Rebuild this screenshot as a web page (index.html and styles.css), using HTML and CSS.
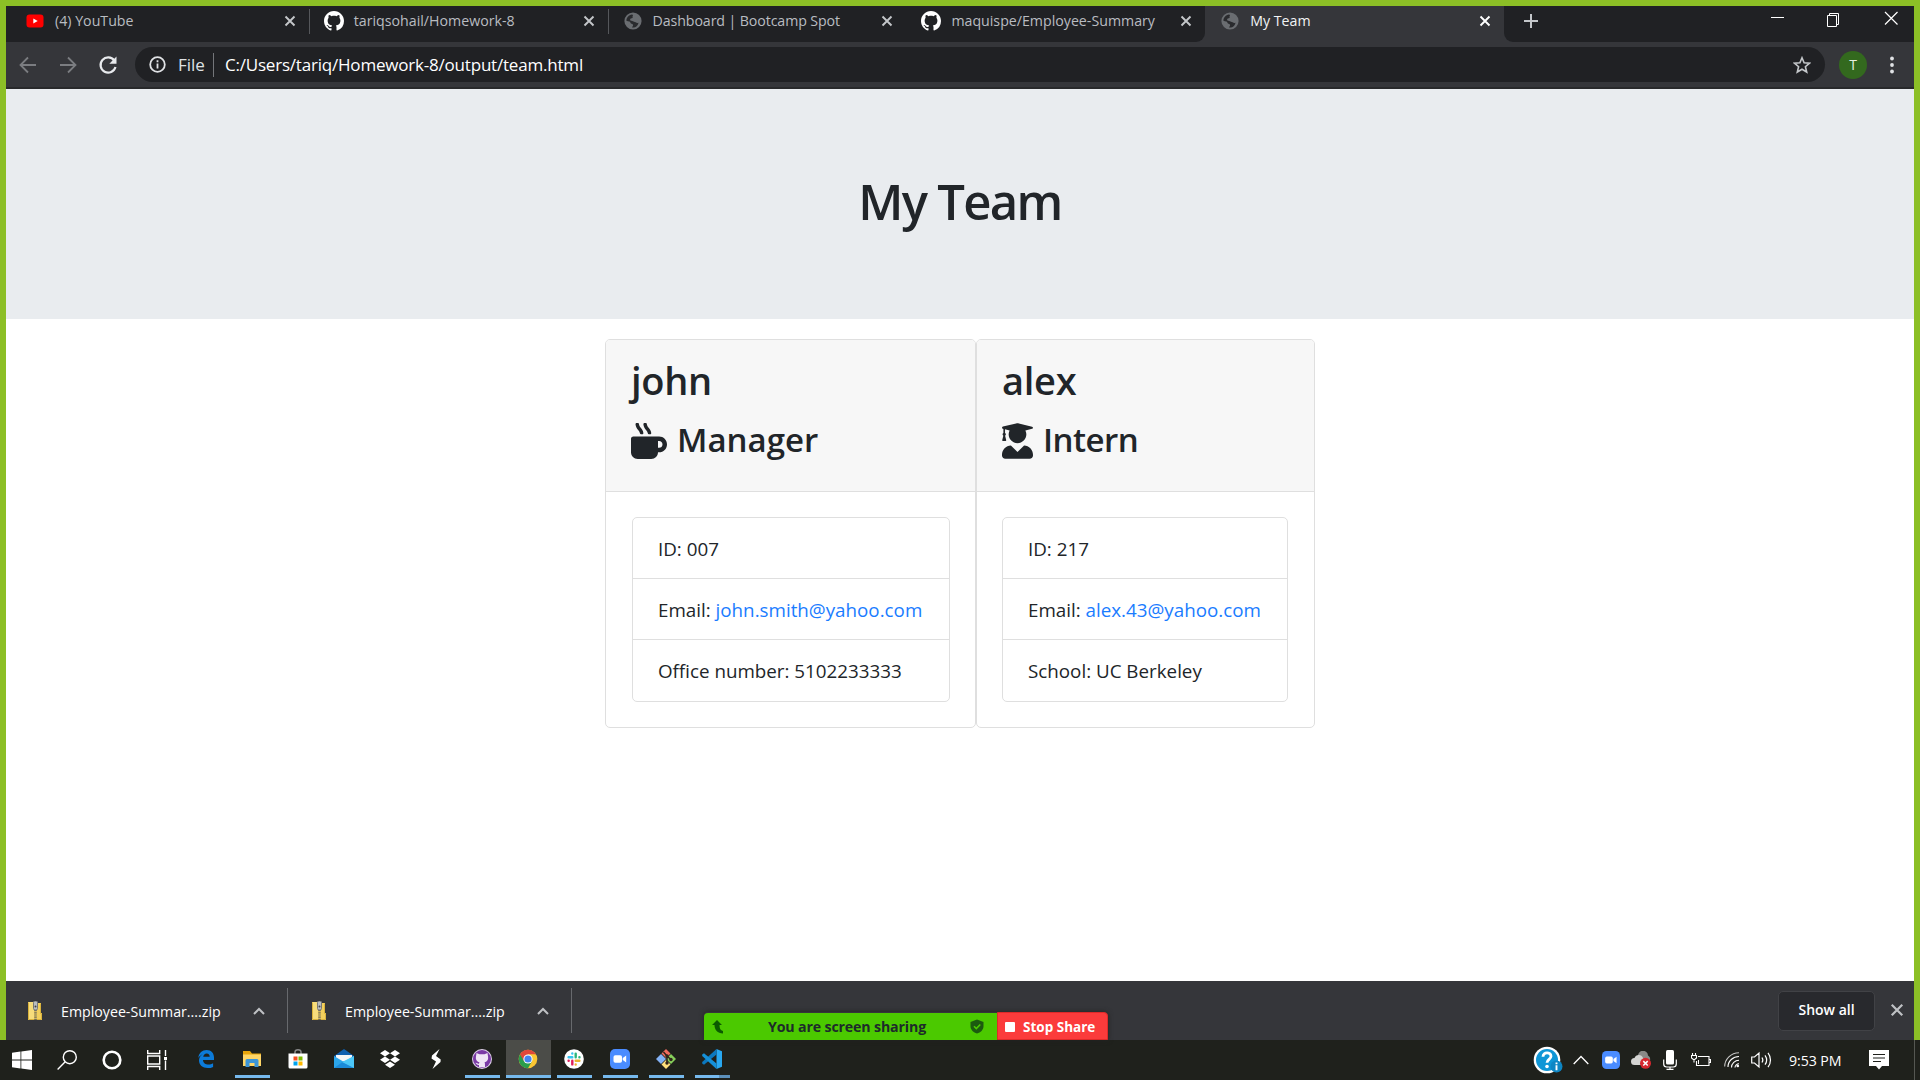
FILE: index.html
```html
<!DOCTYPE html>
<html lang="en">
<head>
<meta charset="utf-8">
<title>My Team</title>
<link rel="stylesheet" href="styles.css">
</head>
<body>
<svg class="defs" width="0" height="0" aria-hidden="true">
  <symbol id="github" viewBox="0 0 16 16"><path d="M8 0C3.58 0 0 3.58 0 8c0 3.54 2.29 6.53 5.47 7.59.4.07.55-.17.55-.38 0-.19-.01-.82-.01-1.49-2.01.37-2.53-.49-2.69-.94-.09-.23-.48-.94-.82-1.13-.28-.15-.68-.52-.01-.53.63-.01 1.08.58 1.23.82.72 1.21 1.87.87 2.33.66.07-.52.28-.87.51-1.07-1.78-.2-3.64-.89-3.64-3.95 0-.87.31-1.59.82-2.15-.08-.2-.36-1.02.08-2.12 0 0 .67-.21 2.2.82.64-.18 1.32-.27 2-.27s1.36.09 2 .27c1.53-1.04 2.2-.82 2.2-.82.44 1.1.16 1.92.08 2.12.51.56.82 1.27.82 2.15 0 3.07-1.87 3.75-3.65 3.95.29.25.54.73.54 1.48 0 1.07-.01 1.93-.01 2.2 0 .21.15.46.55.38A8.01 8.01 0 0 0 16 8c0-4.42-3.58-8-8-8z"/></symbol>
  <symbol id="globe" viewBox="0 0 18 18"><circle cx="9" cy="9" r="8.6" fill="#6a6d71"/><path d="M8 2.400c-3.200.4-5.600 3.200-5.600 6.400 1 .5 2 .3 3 .8 1.500.7.600 1.800 2 2.200 1.300.5 2 .6 1.600 1.900-.3.800-1 1.200-1 1.900 4.200.3 6.200-2.200 6.400-4.800-1.600.6-2.200-.9-3.600-.9-1.200 0-1.400-.8-2.600-1-1.300-.2-2.200-.4-2.100-1.500.1-1 1.500-.8 2.300-1.300.900-.6-.4-1.600.4-2.300.400-.4.300-1-.8-1.400z" fill="#2a2b2e"/></symbol>
  <symbol id="close" viewBox="0 0 12 12"><path d="M1.500 1.500l9 9M10.500 1.500l-9 9" fill="none" stroke="currentColor" stroke-width="1.900"/></symbol>
  <symbol id="zip" viewBox="0 0 14 20"><path d="M0 1h6v18H0z" fill="#f7dc7b"/><path d="M6 2h7v10h1v7H6z" fill="#f2cf5c"/><path d="M.5 1.500v17h13v-6h-1v-10" fill="none" stroke="#d9b23c"/><path d="M7.500 9v10" stroke="#6d6a5c" stroke-width="2.600" stroke-dasharray="1.200 1"/><rect x="5.500" y="0" width="4" height="9" rx="1.500" fill="#b9bcc0" stroke="#777"/><circle cx="7.500" cy="5.500" r="1" fill="#444"/></symbol>
  <symbol id="zoomapp" viewBox="0 0 20 20"><rect width="20" height="20" rx="5" fill="#4a8cff"/><rect x="3.500" y="6.200" width="8.500" height="7.600" rx="1.800" fill="#fff"/><path d="M12.700 9l3.500-2.500v7L12.700 11z" fill="#fff"/></symbol>
</svg>

<div class="screen">
<main class="window">
  <header class="tabs">
    <div class="tab"><svg class="fav" viewBox="0 0 20 20"><rect x="1.500" y="3.500" width="17" height="13" rx="3" fill="#f00"/><path d="M8.300 7.500l4.400 2.500-4.400 2.500z" fill="#fff"/></svg><span class="title">(4) YouTube</span><svg class="x"><use href="#close"/></svg></div>
    <div class="tab"><svg class="fav white"><use href="#github"/></svg><span class="title">tariqsohail/Homework-8</span><svg class="x"><use href="#close"/></svg></div>
    <div class="tab"><svg class="fav globe"><use href="#globe"/></svg><span class="title long">Dashboard | Bootcamp Spot</span><svg class="x"><use href="#close"/></svg></div>
    <div class="tab last"><svg class="fav white"><use href="#github"/></svg><span class="title">maquispe/Employee-Summary</span><svg class="x"><use href="#close"/></svg></div>
    <div class="tab active"><svg class="fav globe"><use href="#globe"/></svg><span class="title">My Team</span><svg class="x"><use href="#close"/></svg></div>
    <div class="strip-end">
      <svg class="plus" width="16" height="16" viewBox="0 0 16 16"><path d="M8 1v14M1 8h14" stroke="#c4c7ca" stroke-width="2"/></svg>
      <svg class="controls" width="130" height="20" viewBox="0 0 130 20"><path d="M1 8.500h13" stroke="#fff"/><path d="M57.500 6.500h9v11h-9zM59.500 6.500v-2h9v11h-2" fill="none" stroke="#fff"/><path d="M115 3l12.500 12.500M127.500 3L115 15.500" stroke="#fff" stroke-width="1.200"/></svg>
    </div>
  </header>

  <nav class="toolbar">
    <svg class="nav-btn dim" viewBox="0 0 20 20"><path d="M18 10H3M10 2.500L2.500 10l7.500 7.500"/></svg>
    <svg class="nav-btn dim" viewBox="0 0 20 20"><path d="M2 10h15M10 2.500l7.500 7.500-7.500 7.500"/></svg>
    <svg class="nav-btn" viewBox="0 0 20 20"><path d="M16.300 5.500A7.600 7.600 0 1 0 17.500 12" stroke-width="2.200"/><path d="M18.500 1.500v7.200h-7.200z" fill="#e8eaed" stroke="none"/></svg>
    <div class="omnibox">
      <svg width="17" height="17" viewBox="0 0 17 17" fill="none" stroke="#e0e2e5" stroke-width="1.800"><circle cx="8.500" cy="8.500" r="7.300"/><path d="M8.500 7.500v5M8.500 4.300v1.900"/></svg>
      <span class="scheme">File</span><span class="url">C:/Users/tariq/Homework-8/output/team.html</span>
      <svg class="star" width="18" height="18" viewBox="0 0 18 18"><path d="M9 1.800l2.100 5 5.400.4-4.100 3.500 1.300 5.300L9 13.200 4.300 16l1.300-5.300L1.500 7.200l5.400-.4z" fill="none" stroke="#c4c7ca" stroke-width="1.600"/></svg>
    </div>
    <span class="avatar">T</span>
    <svg class="dots" width="4" height="18" viewBox="0 0 4 18" fill="#e0e2e5"><circle cx="2" cy="2.500" r="1.900"/><circle cx="2" cy="9" r="1.900"/><circle cx="2" cy="15.500" r="1.900"/></svg>
  </nav>

  <section class="page">
    <div class="jumbotron"><h1>My Team</h1></div>
    <div class="cards">
      <article class="card manager">
        <div class="card-header">
          <h2>john</h2>
          <h3><svg width="36" height="36" viewBox="0 0 512 512"><path d="M127.100 146.500c1.300 7.700 8 13.500 16 13.500h16.500c9.800 0 17.600-8.500 16.300-18-3.800-28.200-16.400-54.200-36.600-74.700-14.400-14.700-23.600-33.300-26.400-53.500C111.800 5.900 105 0 96.800 0H80.400C70.600 0 63 8.500 64.100 18c3.900 31.900 18 61.300 40.600 84.400 12 12.200 19.700 27.500 22.400 44.100zm112 0c1.300 7.700 8 13.500 16 13.500h16.500c9.800 0 17.600-8.500 16.300-18-3.800-28.200-16.400-54.200-36.600-74.700-14.400-14.700-23.600-33.300-26.400-53.500C223.800 5.900 217 0 208.800 0h-16.400c-9.800 0-17.500 8.500-16.300 18 3.900 31.900 18 61.300 40.600 84.400 12 12.200 19.700 27.500 22.400 44.100zM400 192H32c-17.700 0-32 14.300-32 32v192c0 53 43 96 96 96h192c53 0 96-43 96-96h16c61.800 0 112-50.200 112-112s-50.200-112-112-112zm0 160h-16v-96h16c26.500 0 48 21.500 48 48s-21.500 48-48 48z"/></svg><span>Manager</span></h3>
        </div>
        <ul>
          <li>ID: 007</li>
          <li>Email: <a>john.smith@yahoo.com</a></li>
          <li>Office number: 5102233333</li>
        </ul>
      </article>
      <article class="card intern">
        <div class="card-header">
          <h2>alex</h2>
          <h3><svg width="31" height="36" viewBox="0 0 448 512"><path d="M319.400 320.600L224 416l-95.400-95.400C57.100 323.700 0 382.200 0 454.400v9.600c0 26.500 21.500 48 48 48h352c26.500 0 48-21.500 48-48v-9.600c0-72.200-57.100-130.700-128.600-133.800zM13.600 79.800l6.400 1.500v58.400c-7 4.200-12 11.500-12 20.300 0 8.400 4.600 15.400 11.100 19.700L3.500 242c-1.700 6.900 2.100 14 7.600 14h41.800c5.500 0 9.300-7.100 7.600-14l-15.600-62.300C51.400 175.400 56 168.400 56 160c0-8.800-5-16.100-12-20.300V87.100l66 15.900c-8.600 17.200-14 36.400-14 57 0 70.700 57.300 128 128 128s128-57.300 128-128c0-20.600-5.300-39.800-14-57l96.300-23.200c18.200-4.400 18.200-27.100 0-31.500l-190.400-46c-13-3.100-26.700-3.100-39.700 0L13.600 48.200c-18.100 4.400-18.100 27.200 0 31.600z"/></svg><span>Intern</span></h3>
        </div>
        <ul>
          <li>ID: 217</li>
          <li>Email: <a>alex.43@yahoo.com</a></li>
          <li>School: UC Berkeley</li>
        </ul>
      </article>
    </div>
  </section>

  <footer class="shelf">
    <div class="download"><svg width="14" height="20"><use href="#zip"/></svg><span class="file">Employee-Summar....zip</span><svg class="chev" width="12" height="8" viewBox="0 0 12 8"><path d="M1 7l5-5 5 5"/></svg></div>
    <div class="download"><svg width="14" height="20"><use href="#zip"/></svg><span class="file">Employee-Summar....zip</span><svg class="chev" width="12" height="8" viewBox="0 0 12 8"><path d="M1 7l5-5 5 5"/></svg></div>
    <button class="show-all">Show all</button>
    <svg class="shelf-close"><use href="#close"/></svg>
    <div class="share">
      <div class="sharing">
        <svg width="12" height="14" viewBox="0 0 12 14"><path d="M5 0L0 5h2.500c0 5 3 8 8.500 8.500V11C8.500 10.500 7.500 8.500 7.500 5H10z" fill="#0b5a00"/></svg>
        <span>You are screen sharing</span>
        <svg width="14" height="15" viewBox="0 0 14 15"><path d="M7 .5L13.500 3v4c0 4-3 6.500-6.500 7.500C3.500 13.500.5 11 .5 7V3z" fill="#1c5a10"/><path d="M4 7.200l2.300 2.300 4-4" fill="none" stroke="#4bc900" stroke-width="1.600"/></svg>
      </div>
      <div class="stop"><i></i><span>Stop Share</span></div>
    </div>
  </footer>
</main>

<div class="taskbar">
  <div class="system">
    <svg viewBox="0 0 20 20"><path d="M0 2.800l8.500-1.200v8H0zM9.300 1.500L20 0v9.600H9.300zM0 10.400h8.500v8L0 17.200zM9.300 10.400H20V20L9.300 18.500z" fill="#fff"/></svg>
    <svg viewBox="0 0 20 20" fill="none" stroke="#fff" stroke-width="1.400"><circle cx="12.800" cy="7.200" r="6.500"/><path d="M8.200 11.800L.6 19.400"/></svg>
    <svg viewBox="0 0 20 20"><circle cx="10" cy="10" r="8.300" fill="none" stroke="#fff" stroke-width="2.600"/></svg>
    <svg viewBox="0 0 20 20" fill="none" stroke="#fff" stroke-width="1.400"><path d="M.7 0v3.500h12V0M.7 20v-3.500h12V20M.7 6h12v8H.7zM18.500 0v6M18.500 10.500V20"/><path d="M17 7h3v3h-3z" fill="#fff" stroke="none"/></svg>
  </div>
  <div class="apps">
    <div class="app"><svg viewBox="0 0 20 20"><path d="M2.200 8.900C3 4 6.200 1 10.500 1 15.500 1 18 4.500 18 8.500v2.600H7c.1 3.200 2.600 4.500 5.400 4.500 1.800 0 3.400-.5 4.700-1.300v3.600C15.500 18.800 13.500 19 11.700 19 6.500 19 3 16 3 11.500c0-2.500 1.200-4.800 3.500-6C4.600 6.200 3.200 7.400 2.200 8.900zM7.200 7.800h6.500c0-1.900-1-3.300-3-3.300S7.600 6 7.200 7.800z" fill="#0c7bd9"/></svg></div>
    <div class="app open"><svg viewBox="0 0 20 20"><path d="M1 2h7l2 2.500h9V17H1z" fill="#e8a50c"/><path d="M1 5.500h18V17H1z" fill="#ffd667"/><path d="M3.500 18v-6.500a1.500 1.500 0 0 1 1.500-1.500h10a1.500 1.500 0 0 1 1.500 1.500V18h-4v-4h-5v4z" fill="#3c95d8"/></svg></div>
    <div class="app"><svg viewBox="0 0 20 20"><path d="M7 5V3c0-3 6-3 6 0v2" fill="none" stroke="#888" stroke-width="1.500"/><path d="M.5 4.500h19V18a1.500 1.500 0 0 1-1.500 1.500H2A1.500 1.500 0 0 1 .5 18z" fill="#fff"/><path d="M5.500 7.500h4v4h-4z" fill="#f25022"/><path d="M10.500 7.500h4v4h-4z" fill="#7fba00"/><path d="M5.500 12.500h4v4h-4z" fill="#00a4ef"/><path d="M10.500 12.500h4v4h-4z" fill="#ffb900"/></svg></div>
    <div class="app"><svg viewBox="0 0 20 20"><path d="M0 7l10-7 10 7v12H0z" fill="#0f5fae"/><path d="M2 6h16v7H2z" fill="#f5f5f5"/><path d="M0 7l10 6 10-6v12H0z" fill="#2ba5ea"/><path d="M0 19l10-7 10 7z" fill="#1b8ad8"/><path d="M20 7v12L8 13z" fill="#4cc7f7"/></svg></div>
    <div class="app"><svg viewBox="0 0 20 20" fill="#fff"><path d="M5 1l5 3.200-5 3.200L0 4.200zM15 1l5 3.200-5 3.200-5-3.200zM5 7.600l5 3.200L5 14l-5-3.200zM15 7.600l5 3.200-5 3.200-5-3.200zM10 12.500l5 3.200-5 3.300-5-3.300z"/></svg></div>
    <div class="app"><svg viewBox="0 0 20 20" fill="#fff"><path d="M13.500 0L6 6.500 5.500 9.500l4.500 3L6.500 20l8-7 .2-2.500-4.700-3.500z"/></svg></div>
    <div class="app open"><svg viewBox="0 0 20 20"><circle cx="10" cy="10" r="10" fill="#ddd0e8"/><circle cx="10" cy="10" r="9" fill="#7a3ba5"/><path d="M4.500 4l3 1.300h5l3-1.300.6 4c.5 3-1.300 4.800-3.600 5.200.5.700.5 1.500.5 5H7v-2.300c-2 .4-2.500-1.400-3.500-2 1.500-.4 2 1.200 3.500.9 0-.6.200-1.100.5-1.600C5.200 12.800 3.400 11 3.900 8z" fill="#efe6f5"/></svg></div>
    <div class="app open current"><svg viewBox="0 0 20 20"><circle cx="10" cy="10" r="9.300" fill="#fbc633"/><path d="M10 10L1.950 5.350A9.300 9.300 0 0 0 10 19.300l4-7z" fill="#2a9d4c"/><path d="M1.950 5.350A9.300 9.300 0 0 1 18.050 5.350H10L6 12.300z" fill="#e0473a"/><circle cx="10" cy="10" r="4.600" fill="#fff"/><circle cx="10" cy="10" r="3.600" fill="#4384f0"/></svg></div>
    <div class="app open"><svg viewBox="0 0 20 20"><circle cx="10" cy="10" r="9.800" fill="#fff"/><g fill="none" stroke-width="2.400" stroke-linecap="round"><path d="M8.300 4.500v.1M4.600 8.200h3.700" stroke="#36c5f0"/><path d="M11.700 4.600v3.700M15.400 8.200h.1" stroke="#2eb67d"/><path d="M11.700 11.700h3.700M11.700 15.400v.1" stroke="#ecb22e"/><path d="M8.300 11.700v3.700M4.600 11.700h.1" stroke="#e01e5a"/></g></svg></div>
    <div class="app open"><svg><use href="#zoomapp"/></svg></div>
    <div class="app open"><svg viewBox="0 0 20 20"><path d="M10 0l4.500 4.500L10 9 5.500 4.500z" fill="#ef6b5e"/><path d="M5 5l5 5-5 5-5-5z" fill="#83b2f5"/><path d="M15 5l5 5-5 5-5-5z" fill="#86cf5a"/><path d="M10 11l4.500 4.500L10 20l-4.500-4.500z" fill="#ffe07c"/><path d="M7.500 3l3.500 4v7M11 7l4 3.500" fill="none" stroke="#30251c" stroke-width="1.500"/><g fill="#30251c"><circle cx="11" cy="7" r="1.700"/><circle cx="11" cy="14" r="1.700"/><circle cx="15" cy="10.500" r="1.700"/></g></svg></div>
    <div class="app open multi"><svg viewBox="0 0 20 20"><path d="M14.500 0L20 2.300v15.400L14.500 20z" fill="#29a8f0"/><path d="M14.500 5.500L2 15.800.2 14.500v-1.400L14.500 0z" fill="#0c78be"/><path d="M14.500 14.500L2 4.300.2 5.500v1.400L14.500 20z" fill="#1590d8"/></svg></div>
  </div>
  <div class="tray">
    <svg class="help" viewBox="0 0 30 28"><circle cx="14" cy="14" r="13.300" fill="#fff"/><circle cx="14" cy="14" r="11" fill="#0f96d6"/><path d="M10 10.700c0-5 8-5 8-.4 0 3-4 3.200-4 6.400" fill="none" stroke="#fff" stroke-width="2.800"/><circle cx="14" cy="20.500" r="1.800" fill="#fff"/><circle cx="23.500" cy="20.500" r="6" fill="#0e86c4"/><path d="M23.500 19.300v5M23.500 16.500v1.700" stroke="#fff" stroke-width="1.900"/></svg>
    <svg class="up" viewBox="0 0 16 10"><path d="M.7 9L8 1.500 15.300 9" fill="none" stroke="#fff" stroke-width="1.300"/></svg>
    <svg class="tz"><use href="#zoomapp"/></svg>
    <svg class="cloud" viewBox="0 0 20 18"><path d="M7 5a5 5 0 0 1 10-.5 4 4 0 0 1-1 7.500H7z" fill="#8a8a88"/><path d="M3.500 14a3.500 3.500 0 0 1 0-7A4.500 4.500 0 0 1 12 7l3 7z" fill="#d4d4d2"/><circle cx="14.500" cy="12.300" r="5.500" fill="#d7282f"/><path d="M12.300 10.100l4.400 4.400M16.700 10.100l-4.400 4.400" stroke="#fff" stroke-width="1.500"/></svg>
    <svg class="mic" viewBox="0 0 14 20"><rect x="3" y="0" width="8" height="14.500" rx="1.500" fill="#fff"/><path d="M.7 9.500v4.500c0 2 1 3 3 3h6.600c2 0 3-1 3-3V9.500M7 17v2.300M3.500 19.300h7" fill="none" stroke="#fff" stroke-width="1.200"/></svg>
    <svg class="bat" viewBox="0 0 20 14" fill="none" stroke="#fff" stroke-width="1.100"><path d="M7 3.500h11v9H5.500V8M18.500 6.500h1v3h-1M1.500 0v2.500M4.500 0v2.500M.5 2.500h5V5L3 7 .5 5zM3 7v2.500"/><path d="M7 7h1v4H7z" fill="#fff" stroke="none"/></svg>
    <svg class="wifi" viewBox="0 0 16 16" fill="none" stroke="#fff" stroke-width="1.100"><path d="M.7 14.500C.7 7 7 .7 15 .7" opacity=".75"/><path d="M4 15C4 9 9 4.500 15 4.500M7.500 15.500c0-4 3.500-7.300 7.500-7.300M11 15.500c0-2 2-3.800 4-3.800"/><circle cx="13.800" cy="14" r="1.300" fill="#fff" stroke="none"/></svg>
    <svg class="vol" viewBox="0 0 21 18" fill="none" stroke="#fff" stroke-width="1.200"><path d="M.7 6h2.800L8 2v14l-4.500-4H.7zM11 6.500c1 1.500 1 3.500 0 5M14 4.300c2 2.800 2 6.600 0 9.400M17 1.800c3.300 4.200 3.300 10.200 0 14.400"/></svg>
    <span class="clock">9:53 PM</span>
    <svg class="note" viewBox="0 0 20 20"><path d="M0 0h20v16h-7l-3 3.500L7 16H0z" fill="#fff"/><path d="M4 4.500h12M4 8h12M4 11.500h8" stroke="#1f211c" stroke-width="1.100"/></svg>
  </div>
</div>
</div>
</body>
</html>
```
FILE: styles.css
```css
* { box-sizing: border-box; }
body { margin: 0; font-family: "Open Sans", "Noto Sans", sans-serif; color: #212529; overflow: hidden; }
svg { display: block; flex: none; }
.defs { position: absolute; }
span, li { white-space: nowrap; }
.screen { width: 1920px; height: 1080px; display: flex; flex-direction: column; }
.window { height: 1040px; border: 6px solid #8cbf26; border-bottom: 0; display: flex; flex-direction: column; background: #fff; }

/* tab strip */
.tabs { height: 36px; background: linear-gradient(90deg, #202124 1190px, #35363a 1190px); display: flex; padding-left: 4px; flex: none; }
.tab { width: 298.8px; display: flex; align-items: center; padding: 0 13px 7px 15px; position: relative; color: #b9bcc1; }
.tab:not(.last):not(.active)::after { content: ""; position: absolute; right: -1px; top: 3px; width: 1px; height: 25px; background: #55575b; }
.fav { width: 20px; height: 20px; }
.fav.white { fill: #fff; }
.fav.globe { padding: 1px; }
.title { flex: 1; margin-left: 10px; font-size: 14.2px; line-height: 20px; }
.title.long { letter-spacing: -.1px; }
.x { width: 12px; height: 12px; color: #c4c7ca; }
.active { background: #35363a; color: #f1f3f4; }
.active .x { color: #fff; }
.last { background: #202124; border-bottom-right-radius: 9px; }
.strip-end { flex: 1; display: flex; justify-content: space-between; padding: 7px 14px 0 19px; background: #202124; border-bottom-left-radius: 9px; }
.controls { margin-top: -4px; }

/* toolbar */
.toolbar { height: 47px; background: #35363a; border-bottom: 2px solid #28292b; display: flex; align-items: center; padding: 0 20px 0 12px; flex: none; }
.nav-btn { width: 20px; height: 20px; margin-right: 20px; fill: none; stroke: #e8eaed; stroke-width: 1.8; }
.dim { stroke: #7b7d81; }
.omnibox { width: 1690px; height: 35px; margin-left: -3px; margin-right: 14px; border-radius: 18px; background: #202124; color: #fff; display: flex; align-items: center; padding: 0 14px; font-size: 17px; }
.scheme { margin-left: 12px; padding-right: 8px; border-right: 1px solid #74767a; line-height: 24px; color: #dfe1e4; }
.url { margin-left: 11px; flex: 1; letter-spacing: -.2px; }
.avatar { width: 28px; height: 28px; border-radius: 50%; background: #33691e; color: #e6efe0; font-size: 14px; line-height: 28px; text-align: center; }
.dots { margin-left: auto; }

/* team page */
.page { flex: 1; background: #fff; min-height: 0; }
.jumbotron { height: 230px; background: #e9ecef; display: flex; justify-content: center; padding-top: 80px; }
h1, h2, h3 { margin: 0; font-weight: 600; line-height: 1.2; }
h1 { font-size: 49px; height: 60px; line-height: 64px; letter-spacing: -1.7px; }
.cards { display: flex; justify-content: center; margin-top: 20px; }
.card { border: 1px solid #dfdfdf; border-radius: 5px; height: 389px; }
.manager { width: 371px; }
.intern { width: 339px; }
.card-header { height: 152px; background: #f7f7f7; border-bottom: 1px solid #dfdfdf; padding: 16px 25px 0; border-radius: 4px 4px 0 0; }
h2 { font-size: 38px; line-height: 48px; margin-bottom: 15px; letter-spacing: -.3px; }
h3 { font-size: 33px; line-height: 42px; display: flex; gap: 10px; }
h3 svg { fill: #212529; margin-top: 4px; }
.intern h3 { letter-spacing: -.5px; }
ul { list-style: none; margin: 25px 25px 0 26px; padding: 0; border: 1px solid #dfdfdf; border-radius: 5px; height: 185px; }
.intern ul { margin: 25px 26px 0 25px; }
li { height: 61px; line-height: 60px; padding: 1px 0 0 25px; border-bottom: 1px solid #dfdfdf; font-size: 18.8px; }
li:last-child { border-bottom: 0; }
a { color: #1a7cff; }

/* downloads */
.shelf { height: 59px; flex: none; background: #35363a; display: flex; align-items: center; position: relative; color: #fff; }
.download { width: 282px; height: 45px; margin-right: 2px; display: flex; align-items: center; padding: 0 22px; border-right: 1px solid #67696d; }
.file { flex: 1; margin: 2px 0 0 19px; font-size: 14.2px; }
.chev { fill: none; stroke: #bfc1c4; stroke-width: 2; }
.show-all { margin-left: auto; width: 97px; height: 40px; padding: 0 0 2px; border: 1px solid #414246; border-radius: 5px; background: #28292d; color: #fff; font: 600 14px "Open Sans", sans-serif; }
.shelf-close { width: 14px; height: 14px; color: #bfc1c4; margin: 0 10px 2px 15px; }
.share { position: absolute; left: 698px; bottom: 0; display: flex; align-items: flex-end; font-weight: 700; box-shadow: 0 0 5px #222; border-radius: 4px 4px 0 0; }
.sharing { width: 293px; height: 27px; background: #4bc900; color: #1d2b2a; border-radius: 4px 0 0 0; display: flex; align-items: center; justify-content: space-between; padding: 0 13px 0 8px; font-size: 14.2px; letter-spacing: -.15px; }
.stop { width: 111px; height: 28px; background: #fb3b3b; border: 1px solid #df2929; color: #fff; border-radius: 0 4px 0 0; display: flex; align-items: center; gap: 8px; padding: 1px 0 0 7px; font-size: 13.5px; }
.stop i { width: 10px; height: 10px; background: #fff; border-radius: 1px; }

/* taskbar */
.taskbar { height: 40px; background: #1f211c; display: flex; color: #fff; }
.system { display: flex; width: 183px; }
.system svg { width: 20px; height: 20px; margin: 10px 13px 0 12px; }
.apps { display: flex; }
.app { width: 46px; height: 38px; display: flex; justify-content: center; padding-top: 9px; position: relative; }
.app svg { width: 20px; height: 20px; }
.open::after { content: ""; position: absolute; left: 6px; right: 5px; bottom: 0; height: 3px; background: #76b9ed; }
.current { background: linear-gradient(#4b4c48, #4b4c48) 1px 0 / 45px 38px no-repeat; }
.current::after { left: 1px; right: 0; }
.multi::after { background: linear-gradient(90deg, #76b9ed 24px, #5c90ba 24px); }
.tray { margin-left: auto; display: flex; align-items: center; padding-right: 25px; border-right: 1px solid #555752; margin-right: 5px; }
.help { width: 30px; height: 28px; }
.up { width: 16px; height: 10px; margin-left: 10px; }
.tz { width: 18px; height: 18px; margin-left: 13px; }
.cloud { width: 20px; height: 18px; margin-left: 11px; }
.mic { width: 14px; height: 20px; margin-left: 12px; }
.bat { width: 20px; height: 14px; margin-left: 14px; }
.wifi { width: 16px; height: 16px; margin-left: 13px; }
.vol { width: 21px; height: 18px; margin-left: 11px; }
.clock { width: 52px; margin: 0 28px 0 17px; font-size: 14.2px; letter-spacing: -.1px; }
.note { width: 20px; height: 20px; }
```
